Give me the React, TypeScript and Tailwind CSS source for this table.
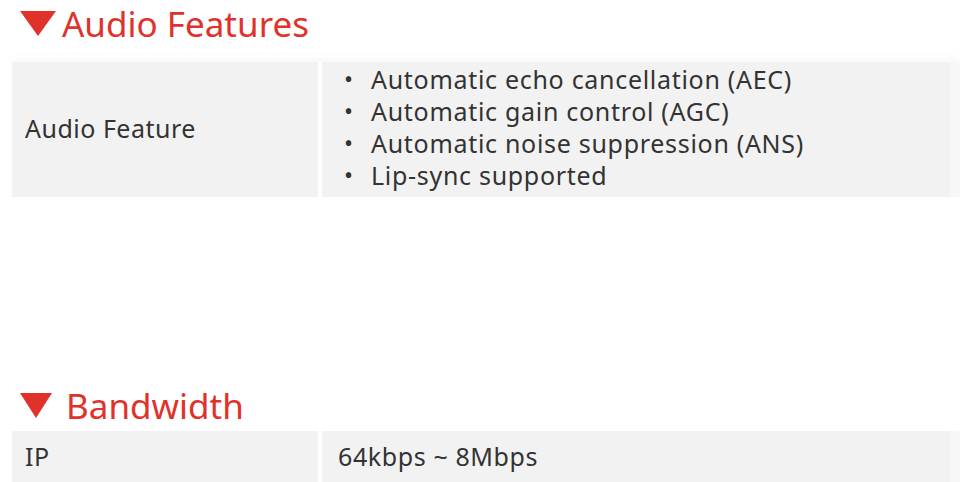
const audio = [
  "Automatic echo cancellation (AEC)",
  "Automatic gain control (AGC)",
  "Automatic noise suppression (ANS)",
  "Lip-sync supported",
];

function Heading({ title, small }: { title: string; small?: boolean }) {
  return (
    <div className={`flex items-center pl-[20px] h-[46px] ${small ? "gap-[14px]" : "gap-[6px]"}`}>
      {small ? (
        <svg width="32" height="26" viewBox="0 0 32 26" className="shrink-0 mt-[2px]">
          <polygon points="0,0 32,0 16,25" fill="#e1312b" />
        </svg>
      ) : (
        <svg width="36" height="26" viewBox="0 0 36 26" className="shrink-0 mt-[2px]">
          <polygon points="0,0 36,0 18,25" fill="#e1312b" />
        </svg>
      )}
      <h2 className="text-[35px] leading-none text-[#e1312b]">{title}</h2>
    </div>
  );
}

export default function App() {
  return (
    <div
      className="w-[960px] h-[482px] overflow-hidden bg-white text-[#333]"
      style={{ fontFamily: '"Noto Sans", "Open Sans", sans-serif' }}
    >
      <Heading title="Audio Features" />

      {/* Audio feature row */}
      <div className="mt-[16px] ml-[12px] flex h-[135px] shadow-[0_-4px_8px_rgba(0,0,0,0.03)]">
        <div className="w-[306px] bg-[#f2f2f2] flex items-center pl-[13px] pb-[2px] text-[25px] tracking-[0.5px]">
          Audio Feature
        </div>
        <div className="ml-[4px] w-[628px] bg-[#f2f2f2] flex flex-col justify-center pl-[22px] pb-[5px] text-[25px] leading-[32px] tracking-[0.7px]">
          {audio.map((t) => (
            <div key={t} className="flex items-center">
              <span className="w-[27px] text-[24px]">•</span>
              <span>{t}</span>
            </div>
          ))}
        </div>
        <div className="flex-1 bg-[#f7f7f7]" />
      </div>

      <div className="h-[185px]" />

      <Heading title="Bandwidth" small />

      <div className="mt-[3px] ml-[12px] flex h-[60px]">
        <div className="w-[306px] bg-[#f2f2f2] flex items-center pl-[13px] text-[25px] pb-[8px] tracking-[0.5px]">
          IP
        </div>
        <div className="ml-[4px] w-[628px] bg-[#f2f2f2] flex items-center pl-[16px] text-[25px] pb-[8px] tracking-[0.6px]">
          64kbps ~ 8Mbps
        </div>
        <div className="flex-1 bg-[#f7f7f7]" />
      </div>
    </div>
  );
}
